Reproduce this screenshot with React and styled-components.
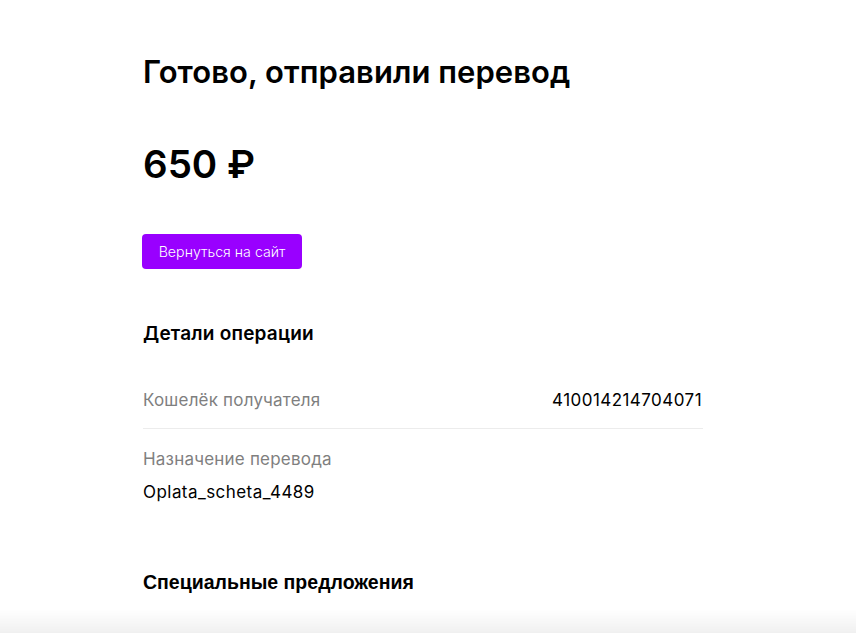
import React from "react";
import styled, { createGlobalStyle } from "styled-components";

const Global = createGlobalStyle`
  html, body { margin: 0; padding: 0; background: #fff; }
  body { font-family: Inter, "Noto Sans", sans-serif; color: #000; }
`;

const Page = styled.main`
  width: 560px;
  margin-left: 143px;
  padding-top: 52px;
  display: flex;
  flex-direction: column;
`;

const Title = styled.h1`
  margin: 0;
  font-size: 31px;
  line-height: 40px;
  font-weight: 600;
  letter-spacing: 0.05px;
`;

const Amount = styled.div`
  margin-top: 47px;
  font-size: 38.5px;
  line-height: 50px;
  font-weight: 600;
  letter-spacing: 0;
`;

const Button = styled.button`
  margin-top: 45px;
  align-self: flex-start;
  margin-left: -1px;
  height: 35px;
  width: 160px;
  border: 0;
  border-radius: 4px;
  background: #9900ff;
  color: #fff;
  font-family: Inter, "Noto Sans", sans-serif;
  font-size: 14.2px;
  font-weight: 300;
  cursor: pointer;
`;

const SectionTitle = styled.h2`
  margin: ${(p) => p.$mt}px 0 0;
  font-family: ${(p) => (p.$arial ? '"Liberation Sans", Arial, sans-serif' : 'Inter, "Noto Sans", sans-serif')};
  font-size: ${(p) => (p.$arial ? 19.5 : 19)}px;
  line-height: 24px;
  font-weight: ${(p) => (p.$arial ? 700 : 600)};
  letter-spacing: ${(p) => (p.$arial ? 0 : 0.2)}px;
`;

const Details = styled.div`
  margin-top: 42px;
  display: flex;
  flex-direction: column;
`;

const Row = styled.div`
  display: flex;
  justify-content: space-between;
  align-items: center;
  padding-bottom: 16px;
  border-bottom: 1px solid #ececec;
`;

const Stack = styled.div`
  display: flex;
  flex-direction: column;
  gap: 9px;
  padding-top: 18px;
`;

const Label = styled.span`
  font-size: 17px;
  line-height: 24px;
  color: #7f7f7f;
  font-weight: 400;
  letter-spacing: 0.2px;
`;

const Value = styled.span`
  margin-right: 1px;
  font-size: 17px;
  line-height: 24px;
  color: #000;
  font-weight: 400;
  letter-spacing: 0.45px;
`;

const BottomShade = styled.div`
  position: fixed;
  left: 0;
  right: 0;
  bottom: 0;
  height: 24px;
  background: linear-gradient(to bottom, rgba(240,240,240,0), rgba(240,240,240,1));
  pointer-events: none;
`;

export default function App() {
  return (
    <>
      <Global />
      <Page>
        <Title>Готово, отправили перевод</Title>
        <Amount>650 ₽</Amount>
        <Button>Вернуться на сайт</Button>
        <SectionTitle $mt={53}>Детали операции</SectionTitle>
        <Details>
          <Row>
            <Label>Кошелёк получателя</Label>
            <Value>410014214704071</Value>
          </Row>
          <Stack>
            <Label>Назначение перевода</Label>
            <Value>Oplata_scheta_4489</Value>
          </Stack>
        </Details>
        <SectionTitle $mt={66} $arial>Специальные предложения</SectionTitle>
      </Page>
      <BottomShade />
    </>
  );
}
